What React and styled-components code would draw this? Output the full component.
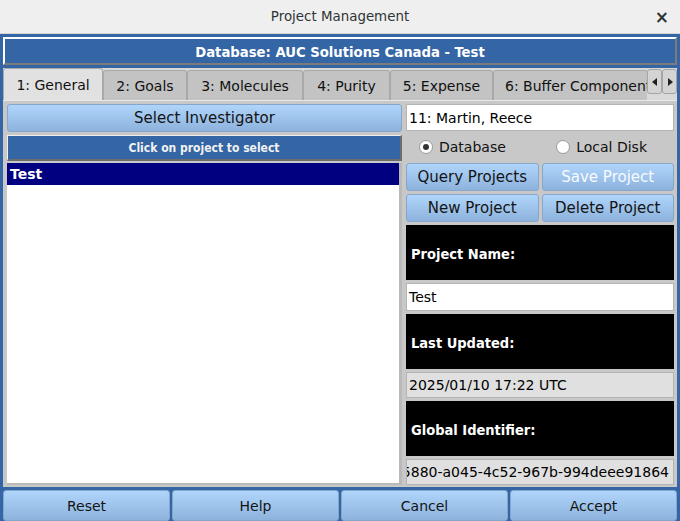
import React from 'react'
import styled, { createGlobalStyle } from 'styled-components'

const GlobalStyle = createGlobalStyle`
  html, body {
    margin: 0;
    padding: 0;
    font-family: "DejaVu Sans", "Liberation Sans", sans-serif;
    font-size: 14px;
  }
`

const boldFont = '"DejaVu Sans Condensed", "DejaVu Sans", sans-serif'

const Window = styled.div`
  width: 680px;
  height: 521px;
  display: flex;
  flex-direction: column;
  background: #3465a4;
  overflow: hidden;
`

const TitleBar = styled.div`
  height: 33px;
  flex-shrink: 0;
  display: flex;
  align-items: center;
  justify-content: center;
  position: relative;
  background: #efefef;
  border-bottom: 1px solid #d6d6d6;
  color: #2e3436;
  font-size: 13.4px;
`

const CloseButton = styled.span`
  position: absolute;
  right: 11px;
  top: 7px;
  font-size: 17px;
  font-weight: bold;
  color: #2e3436;
`

const Body = styled.div`
  flex: 1;
  display: flex;
  flex-direction: column;
  padding: 3px 3px 2px 3px;
  gap: 3px;
`

const DbHeader = styled.div`
  height: 24px;
  display: flex;
  align-items: center;
  justify-content: center;
  background: #3465a4;
  color: #fff;
  font-family: ${boldFont};
  font-weight: bold;
  font-size: 14.7px;
  border-top: 2px solid #fff;
  border-left: 2px solid #fff;
  border-bottom: 2px solid #7b7b7b;
  border-right: 2px solid #7b7b7b;
`

const TabWidget = styled.div`
  display: flex;
  flex-direction: column;
  height: 419px;
`

const TabBar = styled.div`
  height: 32px;
  display: flex;
  align-items: flex-end;
  background: #d9d9d9;
`

const TabList = styled.div`
  flex: 1;
  display: flex;
  align-items: flex-end;
  overflow: hidden;
  height: 100%;
`

const Tab = styled.div`
  flex-shrink: 0;
  height: ${p => (p.$active ? 32 : 30)}px;
  box-sizing: border-box;
  display: flex;
  align-items: center;
  width: ${p => p.$w}px;
  white-space: nowrap;
  background: ${p => (p.$active ? '#e1e1e1' : '#c3c3c3')};
  border: 1px solid #a9a9a9;
  border-bottom: none;
  border-radius: 3px 3px 0 0;
  color: #111;
  overflow: hidden;
  justify-content: ${p => (p.$clip ? 'flex-start' : 'center')};
  padding-left: ${p => (p.$clip ? 11 : 0)}px;
`

const ScrollArrows = styled.div`
  display: flex;
  align-self: flex-start;
  margin-top: 1px;
`

const ArrowButton = styled.div`
  width: 15px;
  height: 25px;
  box-sizing: border-box;
  display: flex;
  align-items: center;
  justify-content: center;
  background: #d4d4d4;
  border: 1px solid #a5a5a5;
  border-radius: 3px;
`

const Panel = styled.div`
  flex: 1;
  display: flex;
  gap: 4px;
  padding: 3px 3px 2px 4px;
  background: #c8c8c8;
  border-top: 1px solid #e8e8e8;
`

const Column = styled.div`
  display: flex;
  flex-direction: column;
  gap: ${p => p.$gap}px;
  width: ${p => p.$w}px;
`

const BlueButton = styled.div`
  height: ${p => p.$h || 28}px;
  box-sizing: border-box;
  flex-shrink: 0;
  flex: ${p => (p.$grow ? 1 : 'none')};
  display: flex;
  align-items: center;
  justify-content: center;
  background: linear-gradient(#afd5fb, #8db3dd);
  border: 1px solid #86a6cc;
  border-radius: 3px;
  font-size: ${p => p.$size || 15}px;
  color: ${p => (p.$disabled ? '#f7faff' : '#141414')};
`

const ButtonRow = styled.div`
  display: flex;
  gap: 3px;
`

const Banner = styled.div`
  height: 26px;
  box-sizing: border-box;
  display: flex;
  align-items: center;
  justify-content: center;
  background: #3465a4;
  color: #f2f2f2;
  font-family: ${boldFont};
  font-weight: bold;
  font-size: 12px;
  border-top: 1px solid #efefef;
  border-left: 1px solid #efefef;
  border-bottom: 2px solid #6c6c6c;
  border-right: 2px solid #6c6c6c;
`

const ListBox = styled.div`
  flex: 1;
  background: #fff;
  border-right: 3px solid #b9b9b9;
  border-bottom: 2px solid #b9b9b9;
  margin-top: -1px;
`

const ListRow = styled.div`
  height: 22px;
  display: flex;
  align-items: center;
  padding-left: 3px;
  background: ${p => (p.$selected ? '#000080' : 'transparent')};
  color: ${p => (p.$selected ? '#fff' : '#000')};
  font-weight: ${p => (p.$selected ? 'bold' : 'normal')};
`

const Field = styled.div`
  height: ${p => p.$h}px;
  box-sizing: border-box;
  flex-shrink: 0;
  display: flex;
  align-items: center;
  justify-content: ${p => (p.$right ? 'flex-end' : 'flex-start')};
  padding: 0 ${p => (p.$right ? 4 : 2)}px;
  background: ${p => (p.$readonly ? '#e0e0e0' : '#fff')};
  border: 1px solid #b4b4b4;
  color: #000;
  white-space: nowrap;
  overflow: hidden;
`

const RadioRow = styled.div`
  height: 26px;
  display: flex;
  align-items: center;
  justify-content: space-between;
  padding: 0 27px 0 13px;
  color: #111;
`

const RadioOption = styled.label`
  display: flex;
  align-items: center;
  gap: 6px;
`

const RadioCircle = styled.span`
  width: 12px;
  height: 12px;
  border-radius: 50%;
  background: #fff;
  border: 1px solid #9a9a9a;
  display: flex;
  align-items: center;
  justify-content: center;
  &::after {
    content: '';
    width: 6px;
    height: 6px;
    border-radius: 50%;
    background: ${p => (p.$checked ? '#333' : 'transparent')};
  }
`

const LabelBlock = styled.div`
  flex: 1;
  display: flex;
  align-items: center;
  padding-left: 5px;
  padding-top: 2px;
  background: #000;
  color: #fff;
  font-family: ${boldFont};
  font-weight: bold;
  font-size: 14.5px;
`

const Footer = styled.div`
  display: grid;
  grid-template-columns: repeat(4, 1fr);
  gap: 2px;
  height: 31px;
`

const tabs = [
  { label: '1: General', w: 100, active: true },
  { label: '2: Goals', w: 84 },
  { label: '3: Molecules', w: 116 },
  { label: '4: Purity', w: 87 },
  { label: '5: Expense', w: 103 },
  { label: '6: Buffer Components', w: 155, clip: true }
]

const Triangle = ({ dir }) => (
  <svg width="6" height="8" viewBox="0 0 6 8">
    {dir === 'left'
      ? <polygon points="5,0 5,8 0,4" fill="#222" />
      : <polygon points="1,0 1,8 6,4" fill="#222" />}
  </svg>
)

export default function App () {
  return (
    <>
      <GlobalStyle />
      <Window>
        <TitleBar>
          Project Management
          <CloseButton>×</CloseButton>
        </TitleBar>
        <Body>
          <DbHeader>Database: AUC Solutions Canada - Test</DbHeader>
          <TabWidget>
            <TabBar>
              <TabList>
                {tabs.map(t => (
                  <Tab key={t.label} $active={t.active} $w={t.w} $clip={t.clip}>
                    {t.label}
                  </Tab>
                ))}
              </TabList>
              <ScrollArrows>
                <ArrowButton><Triangle dir="left" /></ArrowButton>
                <ArrowButton><Triangle dir="right" /></ArrowButton>
              </ScrollArrows>
            </TabBar>
            <Panel>
              <Column $w={396} $gap={3}>
                <BlueButton $h={28}>Select Investigator</BlueButton>
                <Banner>Click on project to select</Banner>
                <ListBox>
                  <ListRow $selected>Test</ListRow>
                </ListBox>
              </Column>
              <Column $w={268} $gap={3}>
                <Field $h={27}>11: Martin, Reece</Field>
                <RadioRow>
                  <RadioOption><RadioCircle $checked />Database</RadioOption>
                  <RadioOption><RadioCircle />Local Disk</RadioOption>
                </RadioRow>
                <ButtonRow>
                  <BlueButton $grow>Query Projects</BlueButton>
                  <BlueButton $grow $disabled>Save Project</BlueButton>
                </ButtonRow>
                <ButtonRow>
                  <BlueButton $grow>New Project</BlueButton>
                  <BlueButton $grow>Delete Project</BlueButton>
                </ButtonRow>
                <LabelBlock>Project Name:</LabelBlock>
                <Field $h={28}>Test</Field>
                <LabelBlock>Last Updated:</LabelBlock>
                <Field $h={26} $readonly>2025/01/10 17:22 UTC</Field>
                <LabelBlock>Global Identifier:</LabelBlock>
                <Field $h={26} $readonly $right>e3b15880-a045-4c52-967b-994deee91864</Field>
              </Column>
            </Panel>
          </TabWidget>
          <Footer>
            <BlueButton $h={31} $size={14}>Reset</BlueButton>
            <BlueButton $h={31} $size={14}>Help</BlueButton>
            <BlueButton $h={31} $size={14}>Cancel</BlueButton>
            <BlueButton $h={31} $size={14}>Accept</BlueButton>
          </Footer>
        </Body>
      </Window>
    </>
  )
}
